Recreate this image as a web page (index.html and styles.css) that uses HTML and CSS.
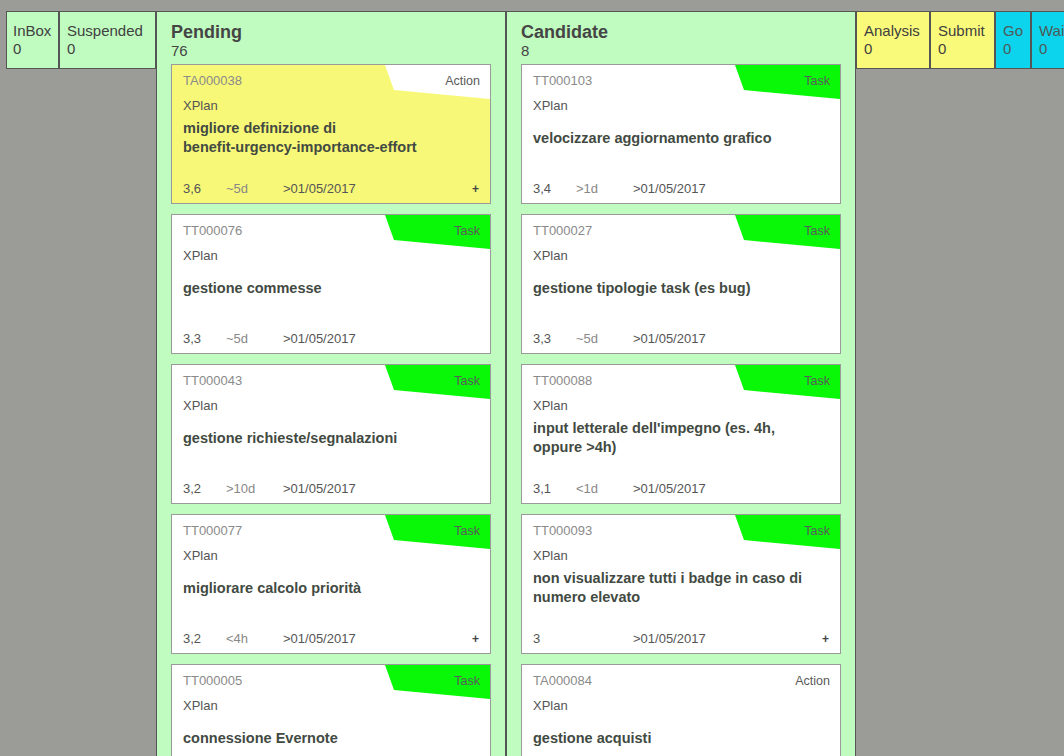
FILE: index.html
```html
<!DOCTYPE html>
<html lang="it">
<head>
<meta charset="utf-8">
<title>Board</title>
<link rel="stylesheet" href="styles.css">
</head>
<body>
<div class="board">
  <div class="col mini green w-inbox"><div class="mini-name">InBox</div><div class="mini-count">0</div></div>
  <div class="col mini green w-susp"><div class="mini-name">Suspended</div><div class="mini-count">0</div></div>

  <div class="col lane green">
    <div class="lane-name">Pending</div>
    <div class="lane-count">76</div>
    <div class="cards">
      <div class="card yellow">
        <div class="badge badge-action"></div>
        <div class="type">Action</div>
        <div class="cid">TA000038</div>
        <div class="proj">XPlan</div>
        <div class="title"><span>migliore definizione di <span class="nowrap">benefit-urgency-importance-effort</span></span></div>
        <div class="foot"><span class="prio">3,6</span><span class="eff">~5d</span><span class="date">&gt;01/05/2017</span><span class="plus">+</span></div>
      </div>
      <div class="card">
        <div class="badge badge-task"></div>
        <div class="type">Task</div>
        <div class="cid">TT000076</div>
        <div class="proj">XPlan</div>
        <div class="title"><span>gestione commesse</span></div>
        <div class="foot"><span class="prio">3,3</span><span class="eff">~5d</span><span class="date">&gt;01/05/2017</span></div>
      </div>
      <div class="card">
        <div class="badge badge-task"></div>
        <div class="type">Task</div>
        <div class="cid">TT000043</div>
        <div class="proj">XPlan</div>
        <div class="title"><span>gestione richieste/segnalazioni</span></div>
        <div class="foot"><span class="prio">3,2</span><span class="eff">&gt;10d</span><span class="date">&gt;01/05/2017</span></div>
      </div>
      <div class="card">
        <div class="badge badge-task"></div>
        <div class="type">Task</div>
        <div class="cid">TT000077</div>
        <div class="proj">XPlan</div>
        <div class="title"><span>migliorare calcolo priorità</span></div>
        <div class="foot"><span class="prio">3,2</span><span class="eff">&lt;4h</span><span class="date">&gt;01/05/2017</span><span class="plus">+</span></div>
      </div>
      <div class="card">
        <div class="badge badge-task"></div>
        <div class="type">Task</div>
        <div class="cid">TT000005</div>
        <div class="proj">XPlan</div>
        <div class="title"><span>connessione Evernote</span></div>
      </div>
    </div>
  </div>

  <div class="col lane green">
    <div class="lane-name">Candidate</div>
    <div class="lane-count">8</div>
    <div class="cards">
      <div class="card">
        <div class="badge badge-task"></div>
        <div class="type">Task</div>
        <div class="cid">TT000103</div>
        <div class="proj">XPlan</div>
        <div class="title"><span>velocizzare aggiornamento grafico</span></div>
        <div class="foot"><span class="prio">3,4</span><span class="eff">&gt;1d</span><span class="date">&gt;01/05/2017</span></div>
      </div>
      <div class="card">
        <div class="badge badge-task"></div>
        <div class="type">Task</div>
        <div class="cid">TT000027</div>
        <div class="proj">XPlan</div>
        <div class="title"><span>gestione tipologie task (es bug)</span></div>
        <div class="foot"><span class="prio">3,3</span><span class="eff">~5d</span><span class="date">&gt;01/05/2017</span></div>
      </div>
      <div class="card">
        <div class="badge badge-task"></div>
        <div class="type">Task</div>
        <div class="cid">TT000088</div>
        <div class="proj">XPlan</div>
        <div class="title"><span>input letterale dell'impegno (es. 4h, oppure &gt;4h)</span></div>
        <div class="foot"><span class="prio">3,1</span><span class="eff">&lt;1d</span><span class="date">&gt;01/05/2017</span></div>
      </div>
      <div class="card">
        <div class="badge badge-task"></div>
        <div class="type">Task</div>
        <div class="cid">TT000093</div>
        <div class="proj">XPlan</div>
        <div class="title"><span>non visualizzare tutti i badge in caso di numero elevato</span></div>
        <div class="foot"><span class="prio">3</span><span class="eff"></span><span class="date">&gt;01/05/2017</span><span class="plus">+</span></div>
      </div>
      <div class="card">
        <div class="type">Action</div>
        <div class="cid">TA000084</div>
        <div class="proj">XPlan</div>
        <div class="title"><span>gestione acquisti</span></div>
      </div>
    </div>
  </div>

  <div class="col mini yellowcol w-analysis"><div class="mini-name">Analysis</div><div class="mini-count">0</div></div>
  <div class="col mini yellowcol w-submit"><div class="mini-name">Submit</div><div class="mini-count">0</div></div>
  <div class="col mini cyan w-go"><div class="mini-name">Go</div><div class="mini-count">0</div></div>
  <div class="col mini cyan w-wait"><div class="mini-name">Waiting</div><div class="mini-count">0</div></div>
</div>
</body>
</html>
```

FILE: styles.css
```css
html, body {
  margin: 0;
  padding: 0;
}
body {
  background: #9b9b97;
  font-family: "Liberation Sans", Arial, sans-serif;
  color: #454545;
  overflow: hidden;
  width: 1064px;
  height: 756px;
}
.board {
  display: flex;
  align-items: flex-start;
  padding: 11px 0 0 6px;
}
.col {
  flex-shrink: 0;
  box-sizing: border-box;
  border: 1px solid #555;
}
.green { background: #c0fcc0; }
.yellowcol { background: #fafa7a; }
.cyan { background: #0cd4ec; }

.mini {
  padding: 10px 7px;
  font-size: 15px;
  line-height: 18px;
  color: #404040;
  white-space: nowrap;
  overflow: hidden;
}
.w-inbox { width: 53px; padding-left: 6px; }
.w-susp { width: 97px; }
.w-analysis { width: 74px; }
.w-submit { width: 65px; }
.w-go { width: 36px; }
.w-wait { width: 90px; }
.cyan .mini-name, .cyan .mini-count { color: #4e5a58; }

.lane {
  width: 350px;
  padding: 10px 14px 0 14px;
  min-height: 800px;
}
.lane-name {
  font-weight: bold;
  font-size: 18px;
  line-height: 20px;
  color: #454545;
}
.lane-count {
  font-size: 15px;
  line-height: 18px;
  color: #454545;
}
.cards {
  margin-top: 4px;
  display: flex;
  flex-direction: column;
  gap: 10px;
}
.card {
  position: relative;
  box-sizing: border-box;
  width: 320px;
  height: 140px;
  background: #fff;
  border: 1px solid #9a9a9a;
  padding: 8px 10px 6px 11px;
}
.card.yellow { background: #f8f878; }
.badge {
  position: absolute;
  top: 0;
  right: 0;
  width: 105px;
  height: 34px;
  clip-path: polygon(0 0, 100% 0, 100% 100%, 9px 25px);
}
.badge-task { background: #08f808; }
.badge-action { background: #fff; }
.type {
  position: absolute;
  top: 8px;
  right: 10px;
  font-size: 12.5px;
  line-height: 16px;
  color: #5a5a5a;
}
.cid {
  position: relative;
  font-size: 13px;
  line-height: 16px;
  color: #8a8a8a;
}
.proj {
  margin-top: 9px;
  font-size: 13px;
  line-height: 16px;
  color: #555;
}
.title {
  margin-top: 5px;
  padding-right: 14px;
  height: 38px;
  display: flex;
  align-items: center;
  font-weight: bold;
  font-size: 14.5px;
  line-height: 19px;
  color: #424a42;
}
.nowrap { white-space: nowrap; }
.foot {
  margin-top: 24px;
  display: flex;
  font-size: 13px;
  line-height: 16px;
  color: #555;
}
.prio { width: 43px; }
.eff { width: 57px; color: #888; }
.plus {
  margin-left: auto;
  margin-right: 1px;
  font-weight: bold;
  font-size: 12px;
  color: #444;
}
```
